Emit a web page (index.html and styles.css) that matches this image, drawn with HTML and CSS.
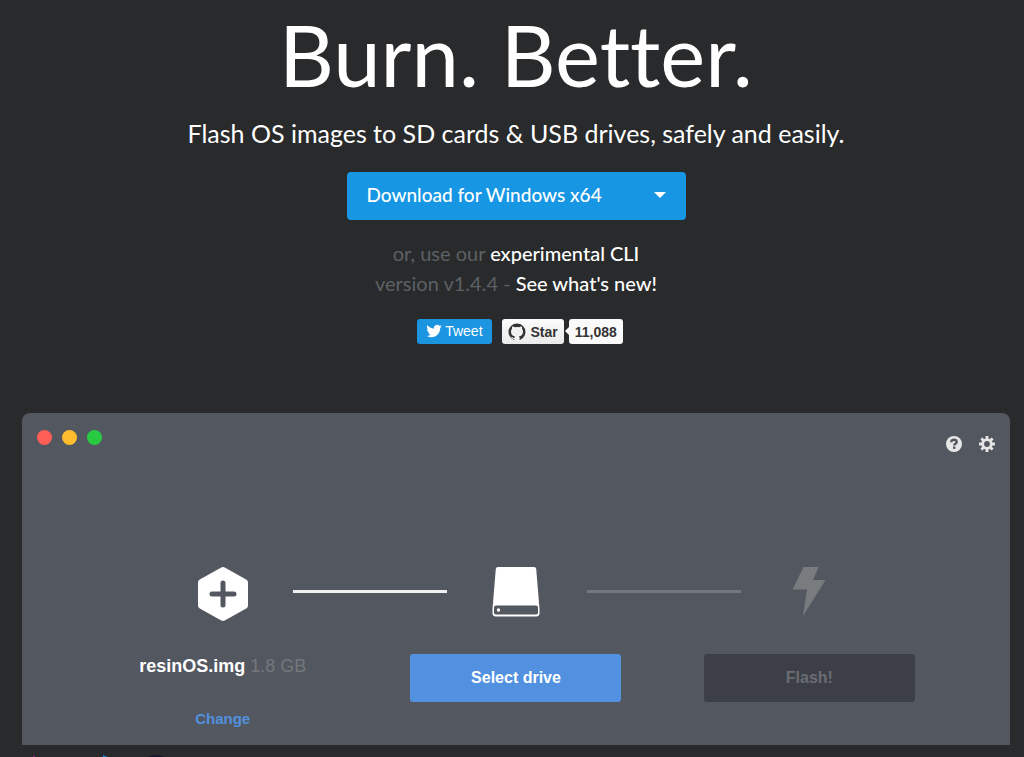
FILE: index.html
```html
<!DOCTYPE html>
<html lang="en">
<head>
    <meta charset="UTF-8">
    <meta name="viewport" content="width=device-width, initial-scale=1.0">
    <title>Etcher</title>
    <link rel="stylesheet" href="styles.css">
</head>
<body>

<header class="hero">
    <h1>Burn. Better.</h1>
    <p class="tagline">Flash OS images to SD cards &amp; USB drives, safely and easily.</p>
    <button type="button" class="download">
        <span>Download for Windows x64</span>
        <span class="caret"></span>
    </button>
    <p class="notes">
        or, use our <a href="#cli">experimental CLI</a><br>
        version v1.4.4 - <a href="#changelog">See what's new!</a>
    </p>
    <div class="social">
        <a href="#tweet" class="tweet">
            <svg width="16" height="16" viewBox="0 0 24 24" fill="#fff" aria-hidden="true"><path d="M23.6 4.9c-.8.4-1.8.7-2.7.8 1-.6 1.7-1.5 2.1-2.6-.9.5-1.9.9-3 1.1a4.75 4.75 0 0 0-8.1 4.3C7.9 8.3 4.4 6.4 2 3.5a4.75 4.75 0 0 0 1.5 6.3c-.8 0-1.5-.2-2.1-.6v.1c0 2.3 1.6 4.2 3.8 4.7-.7.2-1.4.2-2.1.1.6 1.9 2.3 3.2 4.4 3.3A9.5 9.5 0 0 1 .5 19.3a13.4 13.4 0 0 0 7.3 2.1c8.7 0 13.5-7.3 13.5-13.5v-.6c.9-.6 1.7-1.4 2.3-2.4z"/></svg>
            Tweet
        </a>
        <a href="#star" class="star">
            <svg width="18" height="18" viewBox="0 0 18 18" aria-hidden="true"><circle cx="9" cy="9" r="8.500" fill="#333"/><path d="M4.200 3.400Q5.700 3.300 7 4.300q2-.4 4 0 1.300-1 2.800-.9.500 1.200.2 2.400 1 1.200 1 2.900c0 3-1.700 4.200-4 4.600.5.600.6 1.200.6 1.900V18H6.400v-2c-1.800.3-2.400-.5-2.900-1.400l-.7-.7c1.300-.3 1.900 1.500 3.600 1 0-.7.200-1.200.6-1.600C4.700 12.900 3 11.700 3 8.700q0-1.700 1-2.900-.3-1.200.2-2.400z" fill="#f2f2f2"/></svg>
            Star
        </a>
        <a href="#stargazers" class="count">11,088</a>
    </div>
</header>

<main class="app">
    <div class="titlebar">
        <div class="lights">
            <span class="light red"></span>
            <span class="light yellow"></span>
            <span class="light green"></span>
        </div>
        <div class="tools">
            <button type="button" aria-label="Help">
                <svg width="16" height="16" viewBox="0 0 16 16"><circle cx="8" cy="8" r="8" fill="#e6e6e6"/><path d="M5.300 6.200C5.300 4.500 6.500 3.700 8 3.700s2.700.9 2.700 2.200c0 1.900-2.500 1.700-2.500 3.500" fill="none" stroke="#535760" stroke-width="2.400"/><rect x="7" y="10.500" width="2.400" height="2.400" fill="#535760"/></svg>
            </button>
            <button type="button" aria-label="Settings">
                <svg width="16" height="16" viewBox="0 0 16 16"><g fill="#e6e6e6"><rect id="tooth" x="6.600" y="0" width="2.800" height="16" rx=".5"/><use href="#tooth" transform="rotate(45 8 8)"/><use href="#tooth" transform="rotate(90 8 8)"/><use href="#tooth" transform="rotate(135 8 8)"/><circle cx="8" cy="8" r="5.700"/></g><circle cx="8" cy="8" r="2.900" fill="#535760"/></svg>
            </button>
        </div>
    </div>

    <div class="steps">
        <section class="step">
            <svg class="icon" width="52" height="56" viewBox="0 0 52 56"><path d="M26 4.500 47.500 16.500v23L26 51.500 4.500 39.500v-23z" fill="#fff" stroke="#fff" stroke-width="7" stroke-linejoin="round"/><path d="M26 17v22M15 28h22" stroke="#535760" stroke-width="5" stroke-linecap="round"/></svg>
            <p class="file"><b>resinOS.img</b> <span>1.8 GB</span></p>
            <a href="#change" class="change">Change</a>
        </section>
        <section class="step off-next">
            <svg class="icon" width="52" height="56" viewBox="0 0 52 56"><path d="M8 1h36q2 0 2.200 2l3.300 40v4q0 3.500-3.500 3.500H6q-3.500 0-3.500-3.500v-4L5.800 3Q6 1 8 1z" fill="#fff"/><rect x="4" y="39.500" width="44" height="9" rx="2" fill="#535760"/><circle cx="8.500" cy="44" r="1.700" fill="#fff"/></svg>
            <button type="button" class="action">Select drive</button>
        </section>
        <section class="step">
            <svg class="icon" width="52" height="56" viewBox="0 0 52 56"><path d="M20.500 1h15l-5.500 13h12.500L20 50l4-26.500H9.500z" fill="#787c7f"/></svg>
            <button type="button" class="action" disabled>Flash!</button>
        </section>
    </div>
</main>

<footer class="logos">
    <svg width="160" height="40" viewBox="0 0 160 40" aria-hidden="true"><path d="M12 0 24 22H0z" fill="#8c1f8c"/><path d="M81 0 105 10 81 28z" fill="#0f7fd0"/><circle cx="134" cy="20" r="20" fill="#15182b"/></svg>
</footer>

</body>
</html>
```
FILE: styles.css
```css
* {
    box-sizing: border-box;
}

body {
    font-family: Lato, "Liberation Sans", sans-serif;
    font-variant-ligatures: none;
    margin: 0;
    padding: 0 14px 0 22px;
    height: 100vh;
    overflow: hidden;
    background-color: #292a2b;
    color: white;
    display: flex;
    flex-direction: column;
}

a {
    color: white;
    text-decoration: none;
}

button {
    font-family: inherit;
    border: none;
    cursor: pointer;
}

.hero {
    display: flex;
    flex-direction: column;
    align-items: center;
}

h1 {
    margin: 0;
    font-size: 85px;
    line-height: 108px;
    font-weight: 400;
}

.tagline {
    margin: 7px 0 0;
    font-size: 25px;
    line-height: 36px;
}

.download {
    display: flex;
    justify-content: space-between;
    align-items: center;
    width: 339px;
    height: 48px;
    margin-top: 21px;
    padding: 0 20px 3px;
    border-radius: 4px;
    background-color: #1696e3;
    color: white;
    font-size: 19px;
    font-weight: 500;
}

.caret {
    border: 6px solid transparent;
    border-top-color: white;
    border-bottom: none;
}

.notes {
    margin: 18px 0 0;
    font-size: 20px;
    line-height: 30px;
    text-align: center;
    color: #5b6165;
}

.notes a {
    font-weight: 500;
}

.social {
    display: flex;
    margin: 21px 0 0 8px;
    font-family: "Liberation Sans", Arial, sans-serif;
    font-size: 14px;
}

.social a {
    display: flex;
    align-items: center;
    height: 25px;
    border-radius: 3px;
}

.social .tweet {
    gap: 3px;
    padding: 0 9px 2px;
    margin-right: 10px;
    background-color: #1b95e0;
}

.social .star {
    gap: 5px;
    padding: 0 6px;
    margin-right: 5px;
    background-color: #f0f0f0;
    background-image: linear-gradient(#fcfcfc, #eaeaea);
    color: #333;
    font-weight: bold;
}

.social .count {
    position: relative;
    padding: 0 6px;
    background-color: #fafafa;
    color: #333;
    font-weight: bold;
}

.count::before {
    content: "";
    position: absolute;
    left: -4px;
    top: 8px;
    border: 4px solid transparent;
    border-right-color: #fafafa;
    border-left: none;
}

/* App window */
.app {
    flex-shrink: 0;
    margin-top: 69px;
    padding-bottom: 14px;
    border-radius: 8px 8px 0 0;
    background-color: #535760;
    font-family: "Liberation Sans", Arial, sans-serif;
}

.titlebar {
    display: flex;
    justify-content: space-between;
    padding: 17px 15px 0;
}

.lights {
    display: flex;
    gap: 10px;
}

.light {
    width: 15px;
    height: 15px;
    border-radius: 50%;
}

.red { background-color: #ff5f57; }
.yellow { background-color: #ffbd2e; }
.green { background-color: #28ca42; }

.tools {
    display: flex;
    gap: 17px;
    padding-top: 6px;
}

.tools button {
    display: flex;
    padding: 0;
    background: none;
}

.steps {
    display: grid;
    grid-template-columns: repeat(3, 1fr);
    padding: 0 54px;
    margin-top: 114px;
}

.step {
    position: relative;
    display: flex;
    flex-direction: column;
    align-items: center;
}

.icon {
    display: block;
}

/* Line to the next step */
.step:not(:last-child)::after {
    content: "";
    position: absolute;
    top: 24px;
    left: 100%;
    width: 154px;
    height: 3px;
    margin-left: -76px;
    background-color: #f0f0f0;
}

.step.off-next::after {
    background-color: #74787d;
}

.file {
    margin: 32px 0 0;
    font-size: 18px;
    line-height: 24px;
}

.file span {
    color: #73777b;
}

.change {
    margin-top: 29px;
    font-size: 15px;
    line-height: 24px;
    font-weight: bold;
    color: #5191de;
}

.action {
    width: 211px;
    height: 48px;
    margin-top: 32px;
    border-radius: 3px;
    background-color: #5291df;
    color: white;
    font-size: 16px;
    font-weight: bold;
}

.action:disabled {
    background-color: #3c3f47;
    color: #6a6d72;
    cursor: default;
}

.logos {
    flex: 1;
    min-height: 0;
    padding-top: 10px;
    overflow: hidden;
}
```
